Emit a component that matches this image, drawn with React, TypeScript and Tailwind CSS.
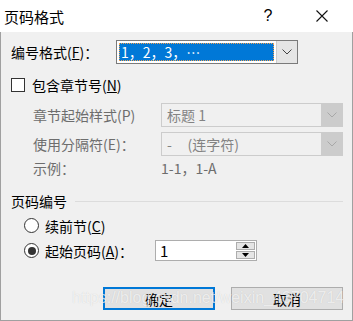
import React from 'react'

const Chevron: React.FC<{ color: string }> = ({ color }) => (
    <svg width="10" height="6" viewBox="0 0 10 6">
        <path d="M0.5 0.5 L5 5 L9.5 0.5" fill="none" stroke={color} strokeWidth="1" />
    </svg>
)

const ComboBox: React.FC<{ text: string; disabled?: boolean; selected?: boolean }> = ({ text, disabled, selected }) => (
    <div
        className={`flex h-[24px] w-[182px] border ${
            disabled ? 'border-[#cccccc] bg-[#f0f0f0]' : 'border-[#7a7a7a] bg-white'
        }`}
    >
        <div className="flex flex-1 p-[2px]">
            {selected ? (
                <div className="flex flex-1 items-center whitespace-pre border border-dotted border-[#f0a050] bg-[#0078d7] pl-[1px] text-white">
                    {text}
                </div>
            ) : (
                <div className="flex flex-1 items-center whitespace-pre pl-[3px] text-[#838383]">{text}</div>
            )}
        </div>
        <div
            className={`flex w-[21px] items-center justify-center border-l ${
                disabled ? 'border-[#cccccc] bg-[#cccccc]' : 'border-[#cccccc] bg-[#e5e5e5]'
            }`}
        >
            <Chevron color={disabled ? '#a8a8a8' : '#444444'} />
        </div>
    </div>
)

const Radio: React.FC<{ checked?: boolean }> = ({ checked }) => (
    <div className="flex h-[15px] w-[15px] items-center justify-center rounded-full border border-[#333333] bg-white">
        {checked && <div className="h-[8px] w-[8px] rounded-full bg-[#333333]" />}
    </div>
)

export default function App() {
    return (
        <div
            className="relative flex h-[321px] w-[353px] flex-col overflow-hidden bg-white text-[14px] text-black"
            style={{ fontFamily: '"Noto Sans CJK SC", "Liberation Sans", sans-serif' }}
        >
            {/* title bar */}
            <div className="flex h-[32px] shrink-0 items-center bg-white">
                <span className="pl-[4px] text-[15px] leading-none">页码格式</span>
                <span className="ml-auto w-[12px] text-center text-[16px] leading-none" style={{ fontFamily: '"Liberation Sans", sans-serif' }}>
                    ?
                </span>
                <svg className="ml-[42px] mr-[25px]" width="12" height="12" viewBox="0 0 12 12">
                    <path d="M0.5 0.5 L11.5 11.5 M11.5 0.5 L0.5 11.5" stroke="#111" strokeWidth="1.1" />
                </svg>
            </div>

            {/* body */}
            <div className="flex flex-1 flex-col border-x border-b border-[#a0a0a0] bg-[#f0f0f0] pt-[8px]">
                <div className="flex h-[24px] items-center">
                    <span className="w-[115px] pl-[10px] leading-none">编号格式(<span className="underline">F</span>)：</span>
                    <ComboBox text="1，2，3，…" selected />
                </div>

                <div className="mt-[8px] flex h-[26px] items-center pl-[10px]">
                    <div className="h-[14px] w-[14px] border border-[#333333] bg-white" />
                    <span className="ml-[7px] leading-none">包含章节号(<span className="underline">N</span>)</span>
                </div>

                <div className="mt-[5px] flex h-[24px] items-center text-[#6d6d6d]">
                    <span className="w-[160px] pl-[32px] leading-none">章节起始样式(P)</span>
                    <ComboBox text="标题 1" disabled />
                </div>

                <div className="mt-[5px] flex h-[24px] items-center text-[#6d6d6d]">
                    <span className="w-[160px] pl-[32px] leading-none">使用分隔符(E)：</span>
                    <ComboBox text={'-     (连字符)'} disabled />
                </div>

                <div className="mt-[2px] flex h-[20px] items-center text-[#6d6d6d]">
                    <span className="w-[160px] pl-[32px] leading-none">示例：</span>
                    <span className="leading-none">1-1，1-A</span>
                </div>

                <div className="mt-[13px] flex h-[20px] items-center pl-[10px]">
                    <span className="leading-none">页码编号</span>
                    <div className="ml-[8px] mr-[9px] h-px flex-1 bg-[#dcdcdc]" />
                </div>

                <div className="mt-[4px] flex h-[21px] items-center pl-[23px]">
                    <Radio />
                    <span className="ml-[6px] leading-none">续前节(<span className="underline">C</span>)</span>
                </div>

                <div className="mt-[4px] flex h-[21px] items-center pl-[23px]">
                    <Radio checked />
                    <span className="ml-[6px] w-[110px] leading-none">起始页码(<span className="underline">A</span>)：</span>
                    <div className="flex h-[21px] w-[102px] border border-[#adadad] bg-white">
                        <span className="flex flex-1 items-center pl-[4px] text-[15px] leading-none">1</span>
                        <div className="flex w-[20px] flex-col gap-px py-[1px] pr-[1px]">
                            <div className="flex flex-1 items-center justify-center border border-[#adadad] bg-[#e5e5e5]">
                                <svg width="7" height="4" viewBox="0 0 7 4"><path d="M3.5 0 L7 4 L0 4 Z" fill="#000" /></svg>
                            </div>
                            <div className="flex flex-1 items-center justify-center border border-[#adadad] bg-[#e5e5e5]">
                                <svg width="7" height="4" viewBox="0 0 7 4"><path d="M0 0 L7 0 L3.5 4 Z" fill="#000" /></svg>
                            </div>
                        </div>
                    </div>
                </div>

                <div className="mt-[26px] flex items-center pl-[102px]">
                    <button className="flex h-[23px] w-[112px] items-center justify-center border-2 border-[#0078d7] bg-[#e1e1e1] leading-none">
                        确定
                    </button>
                    <button className="ml-[16px] flex h-[23px] w-[112px] items-center justify-center border border-[#adadad] bg-[#e1e1e1] leading-none">
                        取消
                    </button>
                </div>
            </div>

            {/* watermark */}
            <span
                className="pointer-events-none absolute left-[72px] top-[290px] whitespace-nowrap text-[16px] leading-none text-white/70"
                style={{ fontFamily: '"Liberation Sans", sans-serif', textShadow: '0 0 1px rgba(0,0,0,0.15)' }}
            >
                https://blog.csdn.net/weixin_43704714
            </span>
        </div>
    )
}
